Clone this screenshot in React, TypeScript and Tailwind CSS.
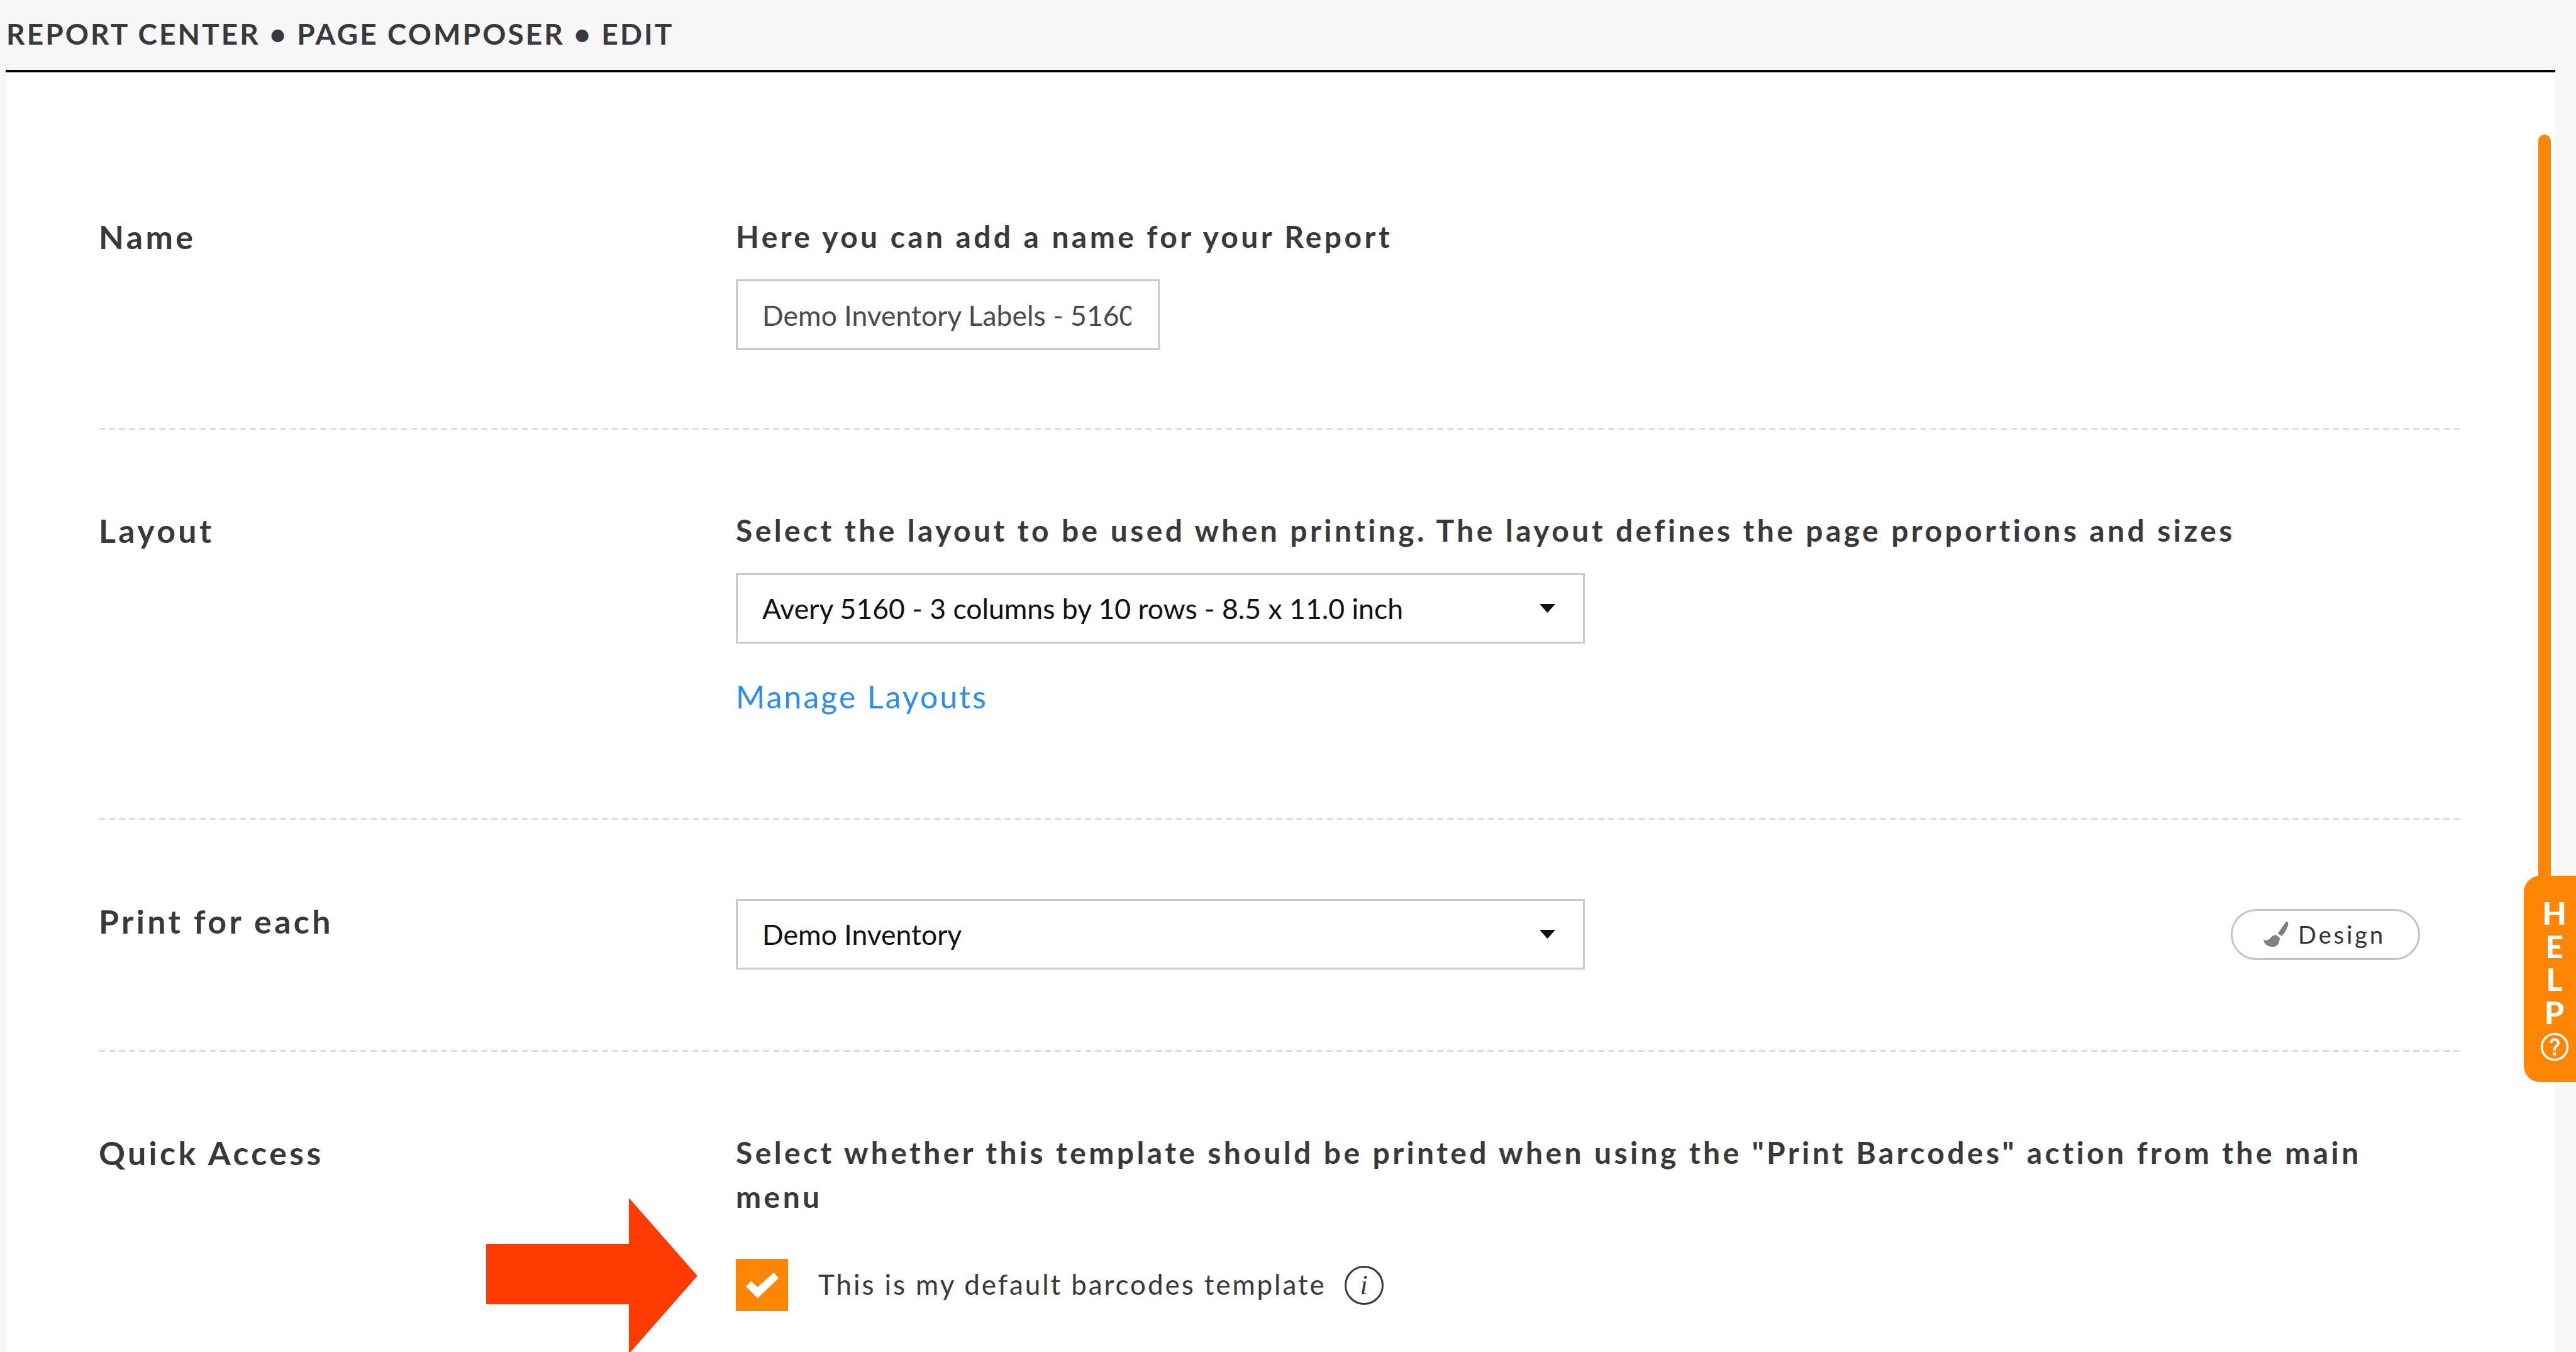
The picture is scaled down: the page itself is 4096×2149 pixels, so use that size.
const Divider = () => (
  <div className="mx-[148px] mr-[150px] h-[3px] bg-[repeating-linear-gradient(90deg,#dcdcdc_0,#dcdcdc_10px,transparent_10px,transparent_16px)]" />
)

const Heading = ({ children }: { children: React.ReactNode }) => (
  <div className="text-[48px] leading-[70px] font-bold tracking-[4.400px] text-[#38383d]">{children}</div>
)

const Label = ({ children }: { children: React.ReactNode }) => (
  <div className="w-[1013px] shrink-0 text-[52px] leading-[70px] font-bold tracking-[4.300px] text-[#38383d]">
    {children}
  </div>
)

const Select = ({ value }: { value: string }) => (
  <div className="flex h-[112px] w-[1350px] items-center justify-between border-[3px] border-[#c9c9c9] bg-white pr-[44px] pl-[39px] text-[44.500px] text-[#111]">
    <span>{value}</span>
    <svg width="25" height="14" viewBox="0 0 25 14">
      <path d="M0 0H25L12.5 14Z" fill="#111" />
    </svg>
  </div>
)

export default function App() {
  return (
    <div className="relative h-[2149px] w-[4096px] overflow-hidden bg-[#f7f7f7] font-['Lato',sans-serif]">
      {/* Breadcrumb */}
      <div className="flex h-[111px] items-center pb-[4px] pl-[10px] text-[46px] font-bold tracking-[3.100px] text-[#38383d]">
        REPORT CENTER • PAGE COMPOSER • EDIT
      </div>

      <div className="mr-[33px] ml-[9px] h-[2038px] border-t-[4px] border-black bg-white">
        {/* Name */}
        <div className="flex px-[148px] pt-[226px] pb-[124px]">
          <Label>Name</Label>
          <div>
            <Heading>Here you can add a name for your Report</Heading>
            <input
              readOnly
              value="Demo Inventory Labels - 5160"
              className="mt-[33px] block h-[112px] w-[674px] border-[3px] border-[#c9c9c9] bg-white pr-[42px] pl-[39px] text-[44.500px] text-[#4a4a4a] outline-none"
            />
          </div>
        </div>
        <Divider />

        {/* Layout */}
        <div className="flex px-[148px] pt-[125px] pb-[158px]">
          <Label>Layout</Label>
          <div>
            <Heading>Select the layout to be used when printing. The layout defines the page proportions and sizes</Heading>
            <div className="mt-[33px]">
              <Select value="Avery 5160 - 3 columns by 10 rows - 8.5 x 11.0 inch" />
            </div>
            <div className="mt-[49px] text-[50px] leading-[70px] tracking-[3px] text-[#2b8cff]">Manage Layouts</div>
          </div>
        </div>
        <Divider />

        {/* Print for each */}
        <div className="flex pt-[126px] pr-[215px] pb-[128px] pl-[148px]">
          <Label>Print for each</Label>
          <div className="flex flex-1 items-center justify-between">
            <Select value="Demo Inventory" />
            <div className="flex h-[81px] w-[301px] items-center rounded-full border-[3px] border-[#c4c4c4] pl-[49px] text-[38px] tracking-[4px] text-[#333]">
              <svg width="40" height="42" viewBox="0 0 40 42" className="mr-[15px]">
                <path
                  d="M38 1c2 1 1.500 5 0 9-2 5-5 10-9 14l-6-4c3-5 6-9 9-13 2-3 4-7 6-6ZM20 22l6 5c0 7-4 14-10 14C8 41 1 38 0 29c2 2 5 2 7 1 3-1 4-3 6-5 2-2 4-3 7-3Z"
                  fill="#808080"
                />
              </svg>
              Design
            </div>
          </div>
        </div>
        <Divider />

        {/* Quick Access */}
        <div className="flex px-[148px] pt-[125px]">
          <Label>Quick Access</Label>
          <div>
            <Heading>
              Select whether this template should be printed when using the "Print Barcodes" action from the main
              <br />
              menu
            </Heading>
            <div className="mt-[64px] flex items-center">
              <div className="flex h-[83px] w-[83px] items-center justify-center bg-[#ff8505]">
                <svg width="52" height="42" viewBox="0 0 56 44">
                  <path d="M0 24 9 15 20 25 48 0 56 10 20 44Z" fill="#fff" />
                </svg>
              </div>
              <span className="mb-[4px] ml-[48px] text-[44px] tracking-[2.900px] text-[#38383d]">This is my default barcodes template</span>
              <div className="ml-[29px] flex h-[62px] w-[62px] items-center justify-center rounded-full border-[3px] border-[#38383d] font-['Liberation_Serif',serif] text-[44px] text-[#38383d] italic">
                i
              </div>
            </div>
          </div>
        </div>
      </div>

      {/* Scroll track + help tab */}
      <div className="absolute top-[214px] left-[4036px] h-[1190px] w-[20px] rounded-t-full bg-[#ff8505]" />
      <div className="absolute top-[1392px] right-0 flex h-[328px] w-[83px] flex-col items-center rounded-l-[26px] bg-[#ff8505] pt-[33px] pl-[14px] text-[50px] leading-[52.500px] font-black text-white">
        <span>H</span>
        <span>E</span>
        <span>L</span>
        <span>P</span>
        <svg width="46" height="46" viewBox="0 0 46 46" className="mt-[6px]">
          <circle cx="23" cy="23" r="20.500" fill="none" stroke="#fff" strokeWidth="3.500" />
          <path d="M15.500 17c0-5 3.500-8 7.500-8s8 3 8 7.500c0 6-6.500 6-6.500 12h-4c0-7 6-8 6-12 0-2-1.500-3.500-3.500-3.500s-3.500 2-3.500 4ZM20.500 31.500h4.500v5h-4.500Z" fill="#fff" />
        </svg>
      </div>

      {/* Annotation arrow */}
      <svg className="absolute top-[1904px] left-[773px]" width="336" height="245" viewBox="0 0 336 245">
        <path d="M0 73H227V0L336 124 227 248V169H0Z" fill="#ff3b00" />
      </svg>
    </div>
  )
}
